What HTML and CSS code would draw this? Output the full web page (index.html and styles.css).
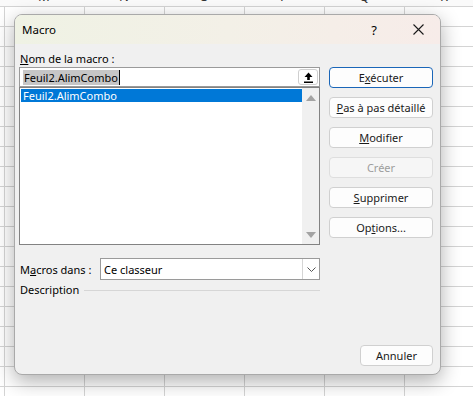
FILE: index.html
```html
<!DOCTYPE html>
<html lang="fr">
<head>
  <meta charset="UTF-8" />
  <title>Macro</title>
  <link rel="stylesheet" href="styles.css">
</head>
<body>
  <div class="sheet-head">
    <span>M</span><span>N</span><span>O</span><span>P</span><span>Q</span><span>R</span>
  </div>
  <div class="sheet"></div>

  <div class="dialog">
    <div class="titlebar">
      <span class="title">Macro</span>
      <span class="tbtn">?</span>
      <span class="tbtn">
        <svg width="11" height="11" viewBox="0 0 11 11"><path d="M0.5 0.5 L10.5 10.5 M10.5 0.5 L0.5 10.5" stroke="#1a1a1a" stroke-width="1.1" fill="none"/></svg>
      </span>
    </div>

    <div class="body">
      <div class="main">
        <div class="left">
          <div class="lbl"><u>N</u>om de la macro :</div>
          <div class="namebox">
            <span class="sel">Feuil2.AlimCombo</span><span class="caret"></span>
            <span class="upbtn">
              <svg width="9" height="11" viewBox="0 0 9 11"><path d="M4.5 0.5 L0.5 5 L3.2 5 L3.2 8 L5.8 8 L5.8 5 L8.5 5 Z" fill="#000"/><rect x="0" y="9.5" width="9" height="1.5" fill="#000"/></svg>
            </span>
          </div>
          <div class="list">
            <div class="items">
              <div class="item active">Feuil2.AlimCombo</div>
            </div>
            <div class="scroll">
              <span class="tri up"></span>
              <span class="tri down"></span>
            </div>
          </div>
          <div class="inrow">
            <span class="inlbl">M<u>a</u>cros dans :</span>
            <div class="select">
              <span class="val">Ce classeur</span>
              <span class="drop">
                <svg width="9" height="5" viewBox="0 0 9 5"><path d="M0.5 0.5 L4.5 4.5 L8.5 0.5" stroke="#555" stroke-width="1" fill="none"/></svg>
              </span>
            </div>
          </div>
          <div class="desc"><span>Description</span><span class="rule"></span></div>
        </div>

        <div class="actions">
          <button class="btn default">E<u>x</u>écuter</button>
          <button class="btn"><u>P</u>as à pas détaillé</button>
          <button class="btn"><u>M</u>odifier</button>
          <button class="btn off">Créer</button>
          <button class="btn"><u>S</u>upprimer</button>
          <button class="btn">Op<u>t</u>ions...</button>
        </div>
      </div>

      <div class="footer">
        <button class="btn cancel">Annuler</button>
      </div>
    </div>
  </div>
</body>
</html>
```

FILE: styles.css
```css
* {
  margin: 0;
  padding: 0;
  box-sizing: border-box;
  font-family: 'Noto Sans', 'Open Sans', sans-serif;
}

body {
  width: 473px;
  height: 396px;
  background: #fff;
  overflow: hidden;
  position: relative;
  font-size: 11px;
  color: #000;
}

/* feuille excel derriere */
.sheet-head {
  height: 6px;
  display: flex;
  padding-left: 4px;
  overflow: hidden;
  background: #fafafa;
}

.sheet-head span {
  width: 80px;
  flex: none;
  text-align: center;
  font-size: 13px;
  line-height: 16px;
  margin-top: -12px;
  color: #333;
}

.sheet {
  height: 390px;
  background-color: #fff;
  background-image:
    linear-gradient(#d4d4d4 1px, transparent 1px),
    linear-gradient(90deg, #d4d4d4 1px, transparent 1px);
  background-size: 80px 20px, 80px 20px;
  background-position: 0 0, 4px 0;
}

/* boite de dialogue */
.dialog {
  position: absolute;
  left: 14px;
  top: 14px;
  width: 427px;
  height: 361px;
  background: #f0f0f0;
  border: 1px solid #a9a9a9;
  border-radius: 8px;
  overflow: hidden;
  display: flex;
  flex-direction: column;
  box-shadow: 0 6px 20px rgba(0, 0, 0, 0.32);
}

.titlebar {
  height: 29px;
  flex: none;
  display: flex;
  align-items: center;
  background: linear-gradient(90deg, #eff2e4, #f3f0e7 50%, #f7ece9);
}

.title {
  flex: 1;
  padding-left: 7px;
  font-size: 11.5px;
}

.tbtn {
  width: 44px;
  height: 29px;
  display: flex;
  align-items: center;
  justify-content: center;
  font-size: 13px;
}

.body {
  flex: 1;
  display: flex;
  flex-direction: column;
  padding: 6px 7px 8px 4px;
}

.main {
  display: flex;
  gap: 9px;
}

.left {
  width: 301px;
}

.lbl {
  line-height: 17px;
  padding-left: 1px;
}

.namebox {
  height: 20px;
  background: #fff;
  border: 1px solid #9a9a9a;
  display: flex;
  align-items: center;
  padding-left: 3px;
}

.sel {
  background: #c6c6c6;
  line-height: 15px;
  height: 15px;
  padding: 0 1px;
}

.caret {
  width: 1px;
  height: 15px;
  background: #000;
}

.upbtn {
  margin-left: auto;
  margin-right: 1px;
  width: 20px;
  height: 16px;
  background: #fff;
  border: 1px solid #cfcfcf;
  border-radius: 3px;
  display: flex;
  align-items: center;
  justify-content: center;
}

.list {
  height: 158px;
  background: #fff;
  border: 1px solid #828282;
  display: flex;
}

.items {
  flex: 1;
  padding: 1px 0 0 1px;
}

.item {
  height: 13px;
  line-height: 13px;
  padding-left: 2px;
}

.item.active {
  background: #0078d7;
  color: #fff;
}

.scroll {
  width: 17px;
  background: #f0f0f0;
  display: flex;
  flex-direction: column;
  justify-content: space-between;
  align-items: center;
  padding: 7px 0 6px;
}

.tri {
  width: 0;
  height: 0;
  border-left: 5px solid transparent;
  border-right: 5px solid transparent;
}

.tri.up {
  border-bottom: 6px solid #a3a3a3;
}

.tri.down {
  border-top: 6px solid #a3a3a3;
}

.inrow {
  margin-top: 13px;
  height: 22px;
  display: flex;
  align-items: center;
}

.inlbl {
  width: 81px;
  padding-left: 1px;
}

.select {
  width: 220px;
  height: 22px;
  background: #fff;
  border: 1px solid #9a9a9a;
  display: flex;
  align-items: center;
}

.val {
  flex: 1;
  padding-left: 3px;
}

.drop {
  width: 17px;
  height: 20px;
  border-left: 1px solid #d5d5d5;
  display: flex;
  align-items: center;
  justify-content: center;
}

.desc {
  margin-top: 2px;
  line-height: 16px;
  display: flex;
  align-items: center;
  gap: 5px;
  padding-left: 1px;
}

.rule {
  flex: 1;
  height: 1px;
  background: #d6d6d6;
}

.actions {
  width: 104px;
  padding-top: 17px;
  display: flex;
  flex-direction: column;
  gap: 9px;
}

.btn {
  height: 21px;
  font-size: 11px;
  background: #fdfdfd;
  border: 1px solid #d0d0d0;
  border-radius: 4px;
  color: #1a1a1a;
}

.btn.default {
  border-color: #1a66b8;
}

.btn.off {
  color: #9d9d9d;
  background: #f6f6f6;
  border-color: #dedede;
}

.footer {
  margin-top: auto;
  display: flex;
  justify-content: flex-end;
}

.btn.cancel {
  width: 73px;
}
```
